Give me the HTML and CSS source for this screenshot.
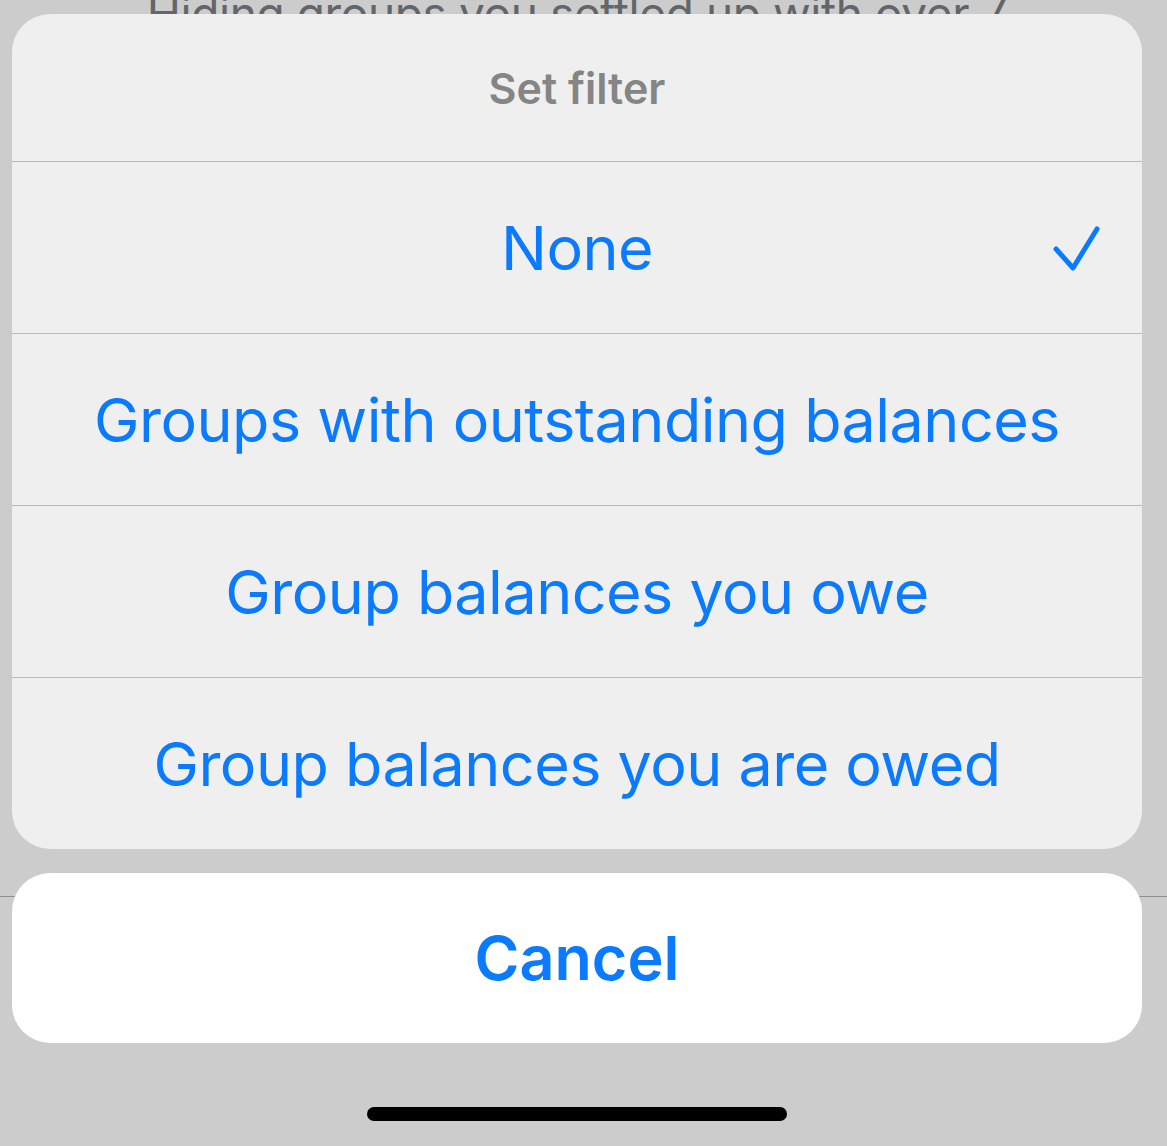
FILE: index.html
```html
<!DOCTYPE html>
<html>
<head>
<meta charset="utf-8">
<link rel="stylesheet" href="styles.css">
</head>
<body>
<div class="backdrop-text"><span>Hiding groups you settled up with over 7</span></div>
<div class="sheet">
  <div class="sheet-title">Set filter</div>
  <div class="option"><span>None</span>
    <svg class="check" width="60" height="60" viewBox="0 0 60 60"><polyline points="6,26 23,45 47,6" fill="none" stroke="#0a7aff" stroke-width="5" stroke-linecap="round" stroke-linejoin="round"/></svg>
  </div>
  <div class="option"><span>Groups with outstanding balances</span></div>
  <div class="option"><span>Group balances you owe</span></div>
  <div class="option"><span>Group balances you are owed</span></div>
</div>
<div class="cancel-wrap">
  <div class="cancel">Cancel</div>
</div>
<div class="home-indicator"></div>
</body>
</html>
```

FILE: styles.css
```css
html, body {
  margin: 0;
  padding: 0;
}
body {
  background: #cccccc;
  font-family: Inter, "Noto Sans", sans-serif;
  width: 1167px;
  height: 1146px;
  overflow: hidden;
}
.backdrop-text {
  height: 14px;
  overflow: hidden;
  padding-left: 12px;
  padding-right: 25px;
  text-align: center;
}
.backdrop-text span {
  display: block;
  margin-top: -10px;
  font-size: 46px;
  line-height: 46px;
  letter-spacing: -0.4px;
  color: #62666b;
  white-space: nowrap;
}
.sheet {
  margin: 0 25px 0 12px;
  background: #efefef;
  border-radius: 38px;
  overflow: hidden;
}
.sheet-title {
  display: flex;
  align-items: center;
  justify-content: center;
  font-size: 43px;
  font-weight: 600;
  color: #858585;
  border-bottom: 1px solid #b9b9b9;
  box-sizing: border-box;
  height: 148px;
}
.option {
  position: relative;
  height: 172px;
  box-sizing: border-box;
  display: flex;
  align-items: center;
  justify-content: center;
  font-size: 61px;
  letter-spacing: -0.5px;
  color: #0a7aff;
  border-bottom: 1px solid #b9b9b9;
}
.option:last-child {
  border-bottom: none;
  height: 171px;
}
.check {
  position: absolute;
  right: 32px;
  top: 61px;
}
.cancel-wrap {
  margin-top: 24px;
  background: linear-gradient(to bottom, transparent 23px, #8f8f8f 23px, #8f8f8f 24px, transparent 24px);
}
.cancel {
  margin: 0 25px 0 12px;
  height: 170px;
  background: #ffffff;
  border-radius: 38px;
  display: flex;
  align-items: center;
  justify-content: center;
  font-size: 61px;
  font-weight: 600;
  color: #0a7aff;
}
.home-indicator {
  width: 420px;
  height: 14px;
  background: #000;
  border-radius: 7px;
  margin: 64px 0 0 367px;
}
```
